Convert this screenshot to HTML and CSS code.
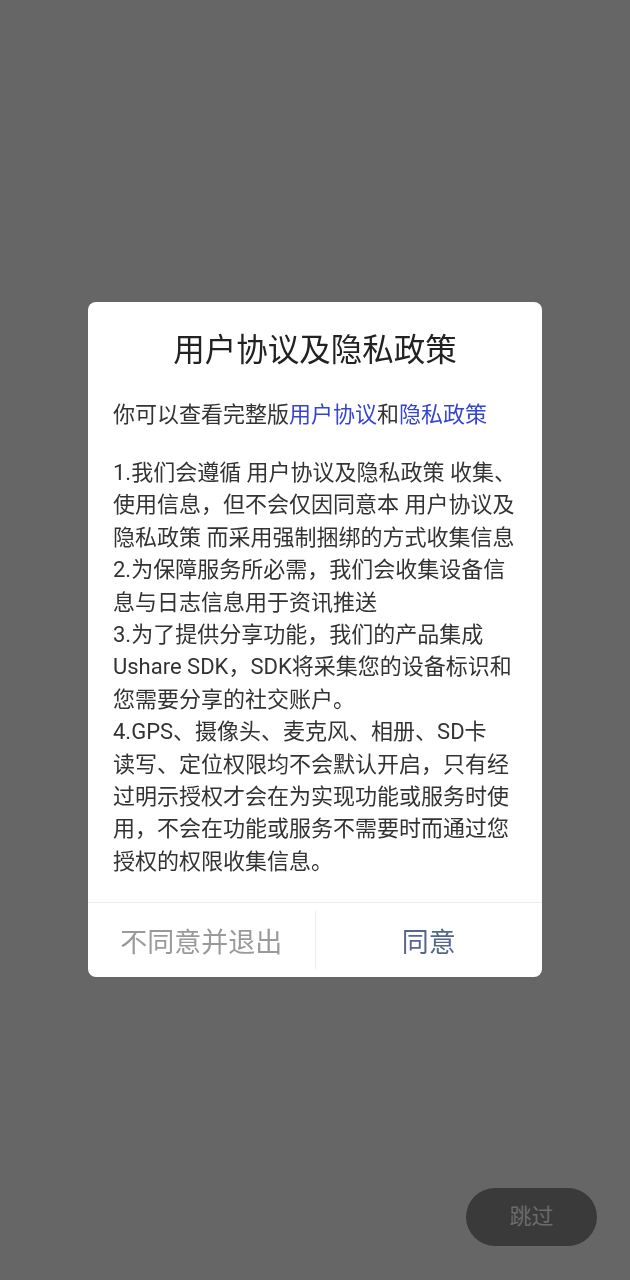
FILE: index.html
```html
<!DOCTYPE html>
<html lang="zh-CN">
<head>
    <meta charset="UTF-8">
    <meta name="viewport" content="width=device-width, initial-scale=1.0">
    <title>用户协议及隐私政策</title>
    <link rel="stylesheet" href="styles.css">
</head>
<body>
    <!-- splash page under the mask -->
    <div class="splash">
        <a href="#" class="skip-btn">跳过</a>
    </div>

    <!-- privacy dialog -->
    <div class="mask">
        <div class="dialog">
            <h1 class="dialog-title">用户协议及隐私政策</h1>
            <p class="dialog-intro">你可以查看完整版<a href="#">用户协议</a>和<a href="#">隐私政策</a></p>
            <div class="dialog-body">
                <p>1.我们会遵循 用户协议及隐私政策 收集、<br>使用信息，但不会仅因同意本 用户协议及<br>隐私政策 而采用强制捆绑的方式收集信息</p>
                <p>2.为保障服务所必需，我们会收集设备信<br>息与日志信息用于资讯推送</p>
                <p>3.为了提供分享功能，我们的产品集成<br>Ushare SDK，SDK将采集您的设备标识和<br>您需要分享的社交账户。</p>
                <p>4.GPS、摄像头、麦克风、相册、SD卡<br>读写、定位权限均不会默认开启，只有经<br>过明示授权才会在为实现功能或服务时使<br>用，不会在功能或服务不需要时而通过您<br>授权的权限收集信息。</p>
            </div>
            <div class="dialog-actions">
                <button class="btn-disagree">不同意并退出</button>
                <span class="action-sep"></span>
                <button class="btn-agree">同意</button>
            </div>
        </div>
    </div>
</body>
</html>
```

FILE: styles.css
```css
html, body {
    margin: 0;
    height: 100%;
}
body {
    font-family: Roboto, "Noto Sans CJK SC", sans-serif;
    background-color: #666666;
    color: #333;
}
.splash {
    position: relative;
    height: 1280px;
}
.skip-btn {
    position: absolute;
    right: 33px;
    bottom: 34px;
    width: 131px;
    height: 58px;
    line-height: 58px;
    border-radius: 29px;
    background: #3a3a3a;
    color: #6b6b6b;
    font-size: 22px;
    text-align: center;
    text-decoration: none;
}

/* mask + dialog */
.mask {
    position: fixed;
    top: 0;
    left: 0;
    right: 0;
    bottom: 0;
    display: flex;
    justify-content: center;
    align-items: flex-start;
}
.dialog {
    width: 454px;
    margin-top: 302px;
    background: #fff;
    border-radius: 8px;
    overflow: hidden;
}
.dialog-title {
    margin: 0;
    padding-top: 29px;
    font-size: 31.5px;
    line-height: 40px;
    font-weight: 400;
    text-align: center;
    color: #222;
}
.dialog-intro {
    margin: 28px 25px 0;
    font-size: 22px;
    line-height: 32px;
    color: #333;
}
.dialog-intro a {
    color: #3644d2;
    text-decoration: none;
}
.dialog-body {
    padding: 26px 25px 24px;
    font-size: 22px;
    line-height: 32.4px;
    color: #333;
}
.dialog-body p {
    margin: 0;
    white-space: nowrap;
}
.dialog-actions {
    display: flex;
    align-items: stretch;
    height: 74px;
    border-top: 1px solid #ececec;
}
.dialog-actions button {
    flex: 1;
    border: none;
    background: none;
    font-family: inherit;
    font-size: 27px;
    cursor: pointer;
}
.action-sep {
    width: 1px;
    margin: 8px 0;
    background: #ececec;
}
.btn-disagree {
    color: #9a9a9a;
}
.btn-agree {
    color: #566789;
}
```
